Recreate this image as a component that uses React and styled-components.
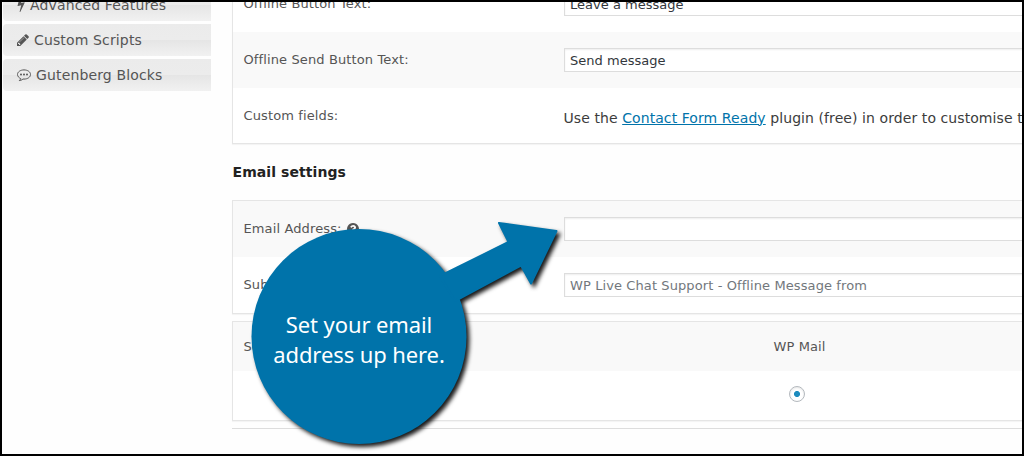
import React from "react";
import styled, { createGlobalStyle } from "styled-components";

const GlobalStyle = createGlobalStyle`
  body {
    margin: 0;
    font-family: Verdana, "DejaVu Sans", sans-serif;
    letter-spacing: 0.08px;
    color: #555;
  }
  * {
    box-sizing: border-box;
  }
`;

const menu = [
  { icon: "bolt", label: "Advanced Features" },
  { icon: "pencil", label: "Custom Scripts" },
  { icon: "comment", label: "Gutenberg Blocks" },
];

const BoltIcon = () => (
  <svg width="8" height="14" viewBox="380 0 1000 1792" preserveAspectRatio="none" fill="currentColor">
    <path d="M1333 566q18 20 7 44l-540 1157q-13 25-42 25-4 0-14-2-17-5-25.5-19t-4.5-30l197-808-406 101q-4 1-12 1-18 0-31-11-18-15-13-39l201-825q4-14 16-23t28-9h328q19 0 32 12.5t13 29.5q0 8-5 18l-171 463 396-98q8-2 12-2 19 0 34 15z" />
  </svg>
);

const PencilIcon = () => (
  <svg width="12" height="14" viewBox="128 0 1536 1792" fill="currentColor">
    <path d="M491 1536l91-91-235-235-91 91v107h128v128h107zm523-928q0-22-22-22-10 0-17 7l-542 542q-7 7-7 17 0 22 22 22 10 0 17-7l542-542q7-7 7-17zm-54-192l416 416-832 832h-416v-416zm683 96q0 53-37 90l-166 166-416-416 166-165q36-38 90-38 53 0 91 38l235 234q37 39 37 91z" />
  </svg>
);

const CommentIcon = () => (
  <svg width="14" height="14" viewBox="0 0 14 14" fill="none" stroke="currentColor">
    <path d="M3.700 10.600C1.800 9.700.5 8.200.5 6.500.5 3.900 3.400 1.900 7 1.900s6.500 2 6.500 4.600S10.600 11.100 7 11.100l-1-.1c-1.200 1.100-2.500 1.500-3.700 1.600.7-.6 1.200-1.200 1.400-2z" strokeWidth="1" strokeLinejoin="round" />
    <g fill="currentColor" stroke="none">
      <circle cx="4" cy="6.500" r="1" />
      <circle cx="7" cy="6.500" r="1" />
      <circle cx="10" cy="6.500" r="1" />
    </g>
  </svg>
);

const HelpIcon = () => (
  <svg width="12" height="14" viewBox="128 0 1536 1792" fill="currentColor">
    <path d="M1024 1376v-192q0-14-9-23t-23-9h-192q-14 0-23 9t-9 23v192q0 14 9 23t23 9h192q14 0 23-9t9-23zm256-672q0-88-55.500-163t-138.500-116-170-41q-243 0-371 213-15 24 8 42l132 100q7 6 19 6 16 0 25-12 53-68 86-92 34-24 86-24 48 0 85.500 26t37.500 59q0 38-20 61t-68 45q-63 28-115.500 86.500t-52.500 125.500v36q0 14 9 23t23 9h192q14 0 23-9t9-23q0-19 21.500-49.500t54.500-49.500q32-18 49-28.500t46-35 44.500-48 28-60.500 12.500-81zm384 192q0 209-103 385.500t-279.500 279.500-385.500 103-385.500-103-279.500-279.500-103-385.500 103-385.500 279.500-279.500 385.500-103 385.500 103 279.500 279.500 103 385.500z" />
  </svg>
);

const icons = { bolt: BoltIcon, pencil: PencilIcon, comment: CommentIcon };

const App = () => {
  return (
    <Page>
      <GlobalStyle />
      <Sidebar>
        {menu.map(({ icon, label }) => {
          const Icon = icons[icon];
          return (
            <MenuItem key={label}>
              <Icon />
              <span>{label}</span>
            </MenuItem>
          );
        })}
      </Sidebar>
      <Main>
        <Panel>
          <Row>
            <Label>Offline Button Text:</Label>
            <Input defaultValue="Leave a message" />
          </Row>
          <Row $shaded>
            <Label>Offline Send Button Text:</Label>
            <Input defaultValue="Send message" />
          </Row>
          <Row $height={55}>
            <Label>Custom fields:</Label>
            <Description>
              Use the <Link href="#">Contact Form Ready</Link> plugin (free) in order to customise the form
            </Description>
          </Row>
        </Panel>
        <Heading>Email settings</Heading>
        <Panel>
          <Row $shaded>
            <Label>
              Email Address: <HelpIcon />
            </Label>
            <Input />
          </Row>
          <Row>
            <Label>Subject:</Label>
            <Input placeholder="WP Live Chat Support - Offline Message from" />
          </Row>
        </Panel>
        <Panel $gap={7}>
          <Row $shaded $height={49}>
            <Label>Sending method</Label>
            <Method>WP Mail</Method>
          </Row>
          <Row $height={49}>
            <Label />
            <Method>
              <Radio type="radio" defaultChecked />
            </Method>
          </Row>
        </Panel>
        <Divider />
      </Main>
      <Callout>
        <CalloutShape width="330" height="240" viewBox="245 215 330 240">
          <circle cx="359" cy="336.500" r="107.500" />
          <path
            d="M440 276 508.500 242 499 223 556.500 231 531 283.500 521 265.500 455 301z"
            strokeWidth="2"
            strokeLinejoin="round"
          />
        </CalloutShape>
        <CalloutText>
          Set your email
          <br />
          address up here.
        </CalloutText>
      </Callout>
    </Page>
  );
};

const Page = styled.div`
  position: relative;
  display: flex;
  width: 1024px;
  height: 456px;
  overflow: hidden;
  border: 2px solid #000;
  background: #fefefe;
`;

const Sidebar = styled.nav`
  display: flex;
  flex: none;
  flex-direction: column;
  gap: 3px;
  width: 209px;
  margin-top: -13px;
  padding-left: 1px;
`;

const MenuItem = styled.a`
  display: flex;
  flex: none;
  align-items: center;
  gap: 5px;
  height: 32px;
  padding-left: 14px;
  border-radius: 4px 0 0 4px;
  background: linear-gradient(#ebebeb, #ececec 50%, #e5e5e5 50%, #f1f1f1);
  font-size: 14px;
  letter-spacing: 0.14px;
  white-space: nowrap;
`;

const Main = styled.main`
  flex: none;
  width: 900px;
  margin: -27px 0 0 21px;
`;

const Panel = styled.section`
  margin-top: ${({ $gap }) => $gap || 0}px;
  border: 1px solid #e5e5e5;
  background: #fff;
  box-shadow: 0 1px 1px rgba(0, 0, 0, 0.04);
`;

const Row = styled.div`
  display: flex;
  align-items: center;
  height: ${({ $height }) => $height || 56}px;
  background: ${({ $shaded }) => ($shaded ? "#f9f9f9" : "#fff")};
`;

const Label = styled.label`
  display: flex;
  flex: none;
  align-items: center;
  gap: 5px;
  width: 331px;
  padding: 0 0 1px 10.5px;
  font-size: 13px;
  letter-spacing: 0.12px;
`;

const Input = styled.input`
  flex: 1;
  height: 24px;
  padding: 0 5px;
  border: 1px solid #ddd;
  outline: 0;
  background: #fff;
  box-shadow: inset 0 1px 2px rgba(0, 0, 0, 0.07);
  color: #32373c;
  font: 13px Verdana, "DejaVu Sans", sans-serif;
  letter-spacing: ${({ placeholder }) => (placeholder ? 0.1 : 0.02)}px;

  &::placeholder {
    color: #72777c;
    opacity: 1;
  }
`;

const Description = styled.p`
  margin: 4px 0 0 -0.5px;
  color: #3c3c3c;
  font-size: 14px;
  white-space: nowrap;
`;

const Link = styled.a`
  color: #0073aa;
`;

const Heading = styled.h3`
  height: 56px;
  margin: 0;
  padding: 19px 0 0 0.5px;
  color: #222;
  font-size: 14px;
  line-height: 18px;
`;

const Method = styled.div`
  display: flex;
  justify-content: center;
  width: 471px;
  font-size: 13px;
`;

const Radio = styled.input`
  appearance: none;
  width: 16px;
  height: 16px;
  margin: 0 5px 4px 0;
  border: 1px solid #b4b9be;
  border-radius: 50%;
  background: radial-gradient(circle, #1e8cbe 2.700px, #fff 3.300px);
  box-shadow: inset 0 1px 2px rgba(0, 0, 0, 0.1);
`;

const Divider = styled.hr`
  height: 1px;
  margin: 7px 0 0;
  border: 0;
  background: #ddd;
`;

/* sits on top of the form and points at the email field */
const Callout = styled.div`
  position: absolute;
  top: 213px;
  left: 243px;
  width: 330px;
  height: 240px;
`;

const CalloutShape = styled.svg`
  display: block;
  overflow: visible;
  fill: #0073aa;
  filter: drop-shadow(3px 3px 2px rgba(0, 0, 0, 0.9));

  path {
    stroke: #0073aa;
  }
`;

const CalloutText = styled.p`
  position: absolute;
  top: 94px;
  left: 14px;
  width: 200px;
  margin: 0;
  color: #fff;
  font-family: "Noto Sans", sans-serif;
  font-size: 22px;
  letter-spacing: -0.1px;
  line-height: 30px;
  text-align: center;
  white-space: nowrap;
`;

export default App;
